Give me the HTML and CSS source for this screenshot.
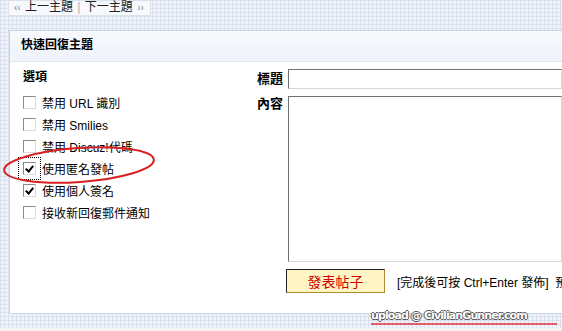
FILE: index.html
```html
<!DOCTYPE html>
<html lang="zh-Hant">
<head>
    <meta charset="UTF-8">
    <title>快速回復主題</title>
    <link rel="stylesheet" href="styles.css">
</head>
<body>
    <div class="nav">
        <span class="arrows">&lsaquo;&lsaquo;</span> 上一主題 <span class="sep">|</span> 下一主題 <span class="arrows">&rsaquo;&rsaquo;</span>
    </div>

    <div class="box">
        <h3 class="box-title">快速回復主題</h3>
        <div class="box-body">
            <div class="options">
                <h4>選項</h4>
                <label class="opt"><input type="checkbox"> 禁用 URL 識別</label>
                <label class="opt"><input type="checkbox"> 禁用 Smilies</label>
                <label class="opt"><input type="checkbox"> 禁用 Discuz!代碼</label>
                <label class="opt"><input type="checkbox" class="focused" checked> 使用匿名發帖</label>
                <label class="opt"><input type="checkbox" checked> 使用個人簽名</label>
                <label class="opt"><input type="checkbox"> 接收新回復郵件通知</label>
            </div>
            <div class="post">
                <span class="field-label center">標題</span>
                <input type="text" class="subject">
                <span class="field-label">內容</span>
                <textarea class="message"></textarea>
                <span></span>
                <div class="actions">
                    <button type="button">發表帖子</button>
                    <span class="hint">[完成後可按 Ctrl+Enter 發佈]&nbsp; 預</span>
                </div>
            </div>
        </div>
    </div>

    <div class="footer"></div>

    <!-- annotation drawn over the screenshot -->
    <svg class="mark" width="160" height="50" viewBox="0 0 160 50">
        <ellipse cx="79" cy="25" rx="75" ry="17" fill="none" stroke="#d81e1e" stroke-width="2" transform="rotate(-4 79 25)"/>
    </svg>
    <div class="watermark">upload @ CivilianGunner.com</div>
</body>
</html>
```

FILE: styles.css
```css
body {
    margin: 0;
    font-family: "Liberation Sans", "Noto Sans CJK TC", sans-serif;
    font-size: 12px;
    color: #000;
    background-color: #f0f3f9;
    background-image:
        repeating-linear-gradient(to right, #dbe1ec 0, #dbe1ec 1px, transparent 1px, transparent 4px),
        repeating-linear-gradient(to bottom, #dbe1ec 0, #dbe1ec 1px, transparent 1px, transparent 4px);
    height: 331px;
    overflow: hidden;
    position: relative;
}
.nav {
    display: inline-block;
    margin-left: 8px;
    height: 15px;
    line-height: 13px;
    padding: 0 6px 0 5px;
    background: #f7f9fc;
    border: 1px solid #dce3ed;
    border-top: none;
    color: #222;
    box-sizing: border-box;
    word-spacing: 1px;
}
.nav .arrows {
    font-size: 10px;
    color: #888;
}
.nav .sep {
    color: #aaa;
}
.box {
    margin: 14px 0 0 9px;
    background: #fff;
    border: 1px solid #ccd5e3;
    border-right: none;
}
.box-title {
    margin: 0;
    height: 30px;
    line-height: 29px;
    padding-left: 11px;
    font-size: 12px;
    background: linear-gradient(#f7f9fd, #eef3fa);
    border-bottom: 1px solid #e3e8f0;
}
.box-body {
    display: flex;
}
.options {
    flex-shrink: 0;
    width: 232px;
    padding: 7px 0 0 13px;
}
.options h4 {
    margin: 0 0 6px;
    font-size: 12px;
    line-height: 16px;
}
.opt {
    display: flex;
    align-items: center;
    height: 22px;
}
.opt input {
    appearance: none;
    width: 13px;
    height: 13px;
    margin: 0 6px 0 0;
    border: 1px solid #dcdcdc;
    border-top-color: #8a8a8a;
    border-left-color: #8a8a8a;
    background: #fff;
    box-sizing: border-box;
    position: relative;
}
.opt input:checked::after {
    content: "";
    position: absolute;
    left: 3px;
    top: 1px;
    width: 3px;
    height: 6px;
    border: solid #000;
    border-width: 0 2px 2px 0;
    transform: rotate(40deg);
}
.opt input.focused {
    outline: 1px dotted #000;
    outline-offset: 4px;
}
.post {
    flex: 1;
    min-width: 0;
    display: grid;
    grid-template-columns: 33px minmax(0, 1fr);
    row-gap: 7px;
    padding: 7px 0 20px;
    align-items: start;
}
.field-label {
    font-weight: bold;
    font-size: 13px;
    text-align: right;
    padding-right: 5px;
    line-height: 16px;
}
.field-label.center {
    align-self: center;
}
.subject, .message {
    display: block;
    width: 100%;
    margin: 0;
    border: 1px solid #d6d6d6;
    border-top-color: #6f6f6f;
    border-left-color: #6f6f6f;
    box-sizing: border-box;
    background: #fff;
}
.subject {
    height: 20px;
}
.message {
    height: 166px;
    resize: none;
}
.actions {
    display: flex;
    align-items: center;
    gap: 12px;
    margin-left: -2px;
}
.actions button {
    flex-shrink: 0;
    width: 99px;
    height: 24px;
    padding: 0;
    font-family: inherit;
    font-size: 14px;
    color: #d00000;
    background: #fff4c4;
    border: 1px solid #222;
    border-right-color: #b08a30;
    border-bottom-color: #b08a30;
}
.hint {
    white-space: nowrap;
}
.footer {
    margin-top: 14px;
    height: 10px;
    background: #f4f4f4;
}
.mark {
    position: absolute;
    left: 0;
    top: 140px;
}
.watermark {
    position: absolute;
    left: 371px;
    top: 309px;
    width: 186px;
    font-family: "DejaVu Sans", sans-serif;
    font-size: 11px;
    font-weight: bold;
    letter-spacing: -0.9px;
    color: #fff;
    text-shadow: -1px 0 #555, 1px 0 #555, 0 -1px #555, 0 1px #555;
    border-bottom: 2px solid #e0606a;
    line-height: 13px;
    padding-bottom: 1px;
}
```
